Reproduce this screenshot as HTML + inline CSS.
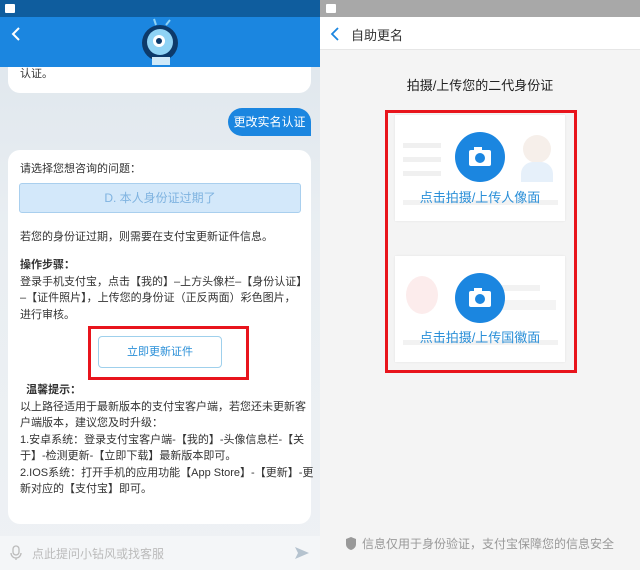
<!DOCTYPE html><html><head><meta charset="utf-8"><style>
*{margin:0;padding:0;box-sizing:border-box}
body{width:640px;height:570px;overflow:hidden;position:relative;font-family:"Liberation Sans","Noto Sans CJK SC",sans-serif;background:#fff}
.a{position:absolute}
.t{font-size:11px;color:#333;white-space:nowrap}
</style></head><body>
<!-- LEFT -->
<div class="a" style="left:0;top:0;width:320px;height:570px;background:linear-gradient(#dde5ec,#e9eef2 40%,#eef1f4)"></div>
<div class="a" style="left:0;top:0;width:320px;height:17px;background:#0f5d9e"></div>
<div class="a" style="left:5px;top:4px;width:10px;height:9px;background:#fff;border-radius:1px"></div>
<div class="a" style="left:0;top:17px;width:320px;height:50px;background:#1b86e0"></div>
<svg class="a" style="left:10px;top:26px" width="12" height="16"><path d="M9 2L3 8l6 6" stroke="#fff" stroke-width="2" fill="none"/></svg>
<svg class="a" style="left:138px;top:17px" width="46" height="50"><circle cx="22" cy="26" r="18" fill="#0d3a6a"/><circle cx="22" cy="25" r="13" fill="#8fd3f5"/><circle cx="21" cy="24" r="6" fill="#fff"/><circle cx="21" cy="24" r="3" fill="#0d3a6a"/><path d="M18 8l-2-6M28 8l4-5" stroke="#8fd3f5" stroke-width="2"/><rect x="14" y="40" width="18" height="8" fill="#cfe9f8"/></svg>
<div class="a" style="left:8px;top:67px;width:303px;height:26px;background:#fff;border-radius:0 0 12px 12px"></div>
<div class="a t" style="left:20px;top:65px;font-size:11px">认证。</div>
<div class="a" style="left:228px;top:108px;width:83px;height:28px;background:#1b86e0;border-radius:14px 14px 0 14px;color:#fff;font-size:12px;text-align:center;line-height:28px">更改实名认证</div>
<div class="a" style="left:8px;top:150px;width:303px;height:374px;background:#fff;border-radius:12px"></div>
<div class="a t" style="left:20px;top:160px">请选择您想咨询的问题：</div>
<div class="a" style="left:19px;top:183px;width:282px;height:30px;background:#d3e8fa;border:1px solid #a9cfee;border-radius:3px;color:#7fb3e0;font-size:12px;text-align:center;line-height:28px">D. 本人身份证过期了</div>
<div class="a t" style="left:20px;top:228px">若您的身份证过期，则需要在支付宝更新证件信息。</div>
<div class="a t" style="left:20px;top:257px;line-height:16.5px"><b>操作步骤：</b><br>登录手机支付宝，点击【我的】–上方头像栏–【身份认证】<br>–【证件照片】，上传您的身份证（正反两面）彩色图片，<br>进行审核。</div>
<div class="a" style="left:88px;top:326px;width:161px;height:54px;border:3px solid #e8141c"></div>
<div class="a" style="left:98px;top:336px;width:124px;height:32px;border:1px solid #9fd0ec;border-radius:4px;color:#2a8fd8;font-size:11px;text-align:center;line-height:30px">立即更新证件</div>
<div class="a t" style="left:20px;top:382px;line-height:16.5px">&nbsp;&nbsp;<b>温馨提示：</b><br>以上路径适用于最新版本的支付宝客户端，若您还未更新客<br>户端版本，建议您及时升级：<br>1.安卓系统：登录支付宝客户端-【我的】-头像信息栏-【关<br>于】-检测更新-【立即下载】最新版本即可。<br>2.IOS系统：打开手机的应用功能【App Store】-【更新】-更<br>新对应的【支付宝】即可。</div>
<div class="a" style="left:0;top:536px;width:320px;height:34px;background:#f4f6f8"></div>
<svg class="a" style="left:10px;top:545px" width="12" height="16"><rect x="3" y="1" width="6" height="9" rx="3" fill="none" stroke="#bbb" stroke-width="1.3"/><path d="M1 8a5 5 0 0 0 10 0M6 13v2" stroke="#bbb" stroke-width="1.3" fill="none"/></svg>
<div class="a t" style="left:32px;top:545px;color:#bbb;font-size:12px">点此提问小钻风或找客服</div>
<svg class="a" style="left:294px;top:546px" width="16" height="14"><path d="M1 1l14 6-14 6 3-6z" fill="#b5c3cf"/></svg>
<!-- RIGHT -->
<div class="a" style="left:320px;top:0;width:320px;height:570px;background:#f4f4f4"></div>
<div class="a" style="left:320px;top:0;width:320px;height:17px;background:#a8a8a8"></div>
<div class="a" style="left:326px;top:4px;width:10px;height:9px;background:#fff;border-radius:1px"></div>
<div class="a" style="left:320px;top:17px;width:320px;height:33px;background:#fff;border-bottom:1px solid #e6e6e6"></div>
<svg class="a" style="left:330px;top:27px" width="10" height="14"><path d="M8 1L2 7l6 6" stroke="#1b86e0" stroke-width="1.8" fill="none"/></svg>
<div class="a t" style="left:351px;top:25px;font-size:13px">自助更名</div>
<div class="a t" style="left:0;width:960px;text-align:center;top:75px;font-size:13px;color:#222">拍摄/上传您的二代身份证</div>
<div class="a" style="left:385px;top:110px;width:192px;height:263px;border:3px solid #e8141c"></div>
<div class="a" style="left:395px;top:115px;width:170px;height:106px;background:#fff;box-shadow:0 0 2px #e4e4e4"></div>
<div class="a" style="left:403px;top:143px;width:38px;height:5px;background:#f0f0f0"></div>
<div class="a" style="left:403px;top:157px;width:38px;height:5px;background:#f0f0f0"></div>
<div class="a" style="left:403px;top:171px;width:38px;height:5px;background:#f0f0f0"></div>
<div class="a" style="left:403px;top:200px;width:155px;height:5px;background:#f2f2f2"></div>
<div class="a" style="left:523px;top:135px;width:28px;height:28px;border-radius:50%;background:#f6efea"></div>
<div class="a" style="left:521px;top:162px;width:32px;height:20px;border-radius:12px 12px 0 0;background:#e6f0fa"></div>
<div class="a" style="left:395px;top:256px;width:170px;height:106px;background:#fff;box-shadow:0 0 2px #e4e4e4"></div>
<div class="a" style="left:406px;top:276px;width:32px;height:38px;border-radius:50%;background:#fcecec"></div>
<div class="a" style="left:500px;top:285px;width:40px;height:6px;background:#f2f2f2"></div>
<div class="a" style="left:460px;top:300px;width:96px;height:10px;background:#f4f4f4"></div>
<div class="a" style="left:403px;top:340px;width:155px;height:5px;background:#f2f2f2"></div>
<svg class="a" style="left:454px;top:131px" width="52" height="52"><circle cx="26" cy="26" r="25" fill="#1b86e0"/><rect x="15" y="19" width="22" height="16" rx="2" fill="#fff"/><rect x="20" y="16" width="8" height="4" fill="#fff"/><circle cx="26" cy="27" r="5" fill="#1b86e0"/></svg>
<svg class="a" style="left:454px;top:272px" width="52" height="52"><circle cx="26" cy="26" r="25" fill="#1b86e0"/><rect x="15" y="19" width="22" height="16" rx="2" fill="#fff"/><rect x="20" y="16" width="8" height="4" fill="#fff"/><circle cx="26" cy="27" r="5" fill="#1b86e0"/></svg>
<div class="a t" style="left:320px;width:320px;text-align:center;top:187px;font-size:13px;color:#2a8fd8">点击拍摄/上传人像面</div>
<div class="a t" style="left:320px;width:320px;text-align:center;top:327px;font-size:13px;color:#2a8fd8">点击拍摄/上传国徽面</div>
<svg class="a" style="left:345px;top:536px" width="12" height="14"><path d="M6 1l5 2v5c0 3-2 5-5 6-3-1-5-3-5-6V3z" fill="#999"/></svg>
<div class="a t" style="left:362px;top:535px;color:#999;font-size:12px">信息仅用于身份验证，支付宝保障您的信息安全</div>
</body></html>
